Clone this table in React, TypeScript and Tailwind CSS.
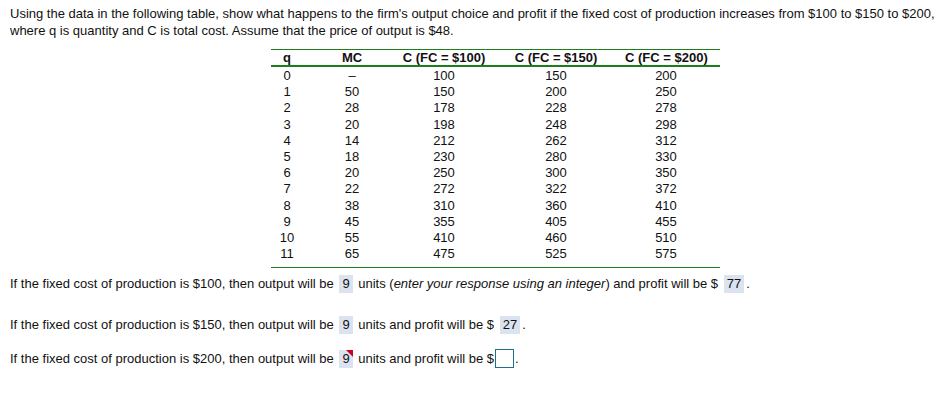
import React from "react";

const rows: [string, string, string, string, string][] = [
  ["0", "–", "100", "150", "200"],
  ["1", "50", "150", "200", "250"],
  ["2", "28", "178", "228", "278"],
  ["3", "20", "198", "248", "298"],
  ["4", "14", "212", "262", "312"],
  ["5", "18", "230", "280", "330"],
  ["6", "20", "250", "300", "350"],
  ["7", "22", "272", "322", "372"],
  ["8", "38", "310", "360", "410"],
  ["9", "45", "355", "405", "455"],
  ["10", "55", "410", "460", "510"],
  ["11", "65", "475", "525", "575"],
];

const cols = "grid-cols-[32px_98px_86px_138px_82px_13px]";

function Ans({ v, flag }: { v: string; flag?: boolean }) {
  return (
    <span className="relative inline-block bg-[#dce3f0] px-[3px] mx-[2px] leading-[18px]">
      {v}
      {flag && (
        <span className="absolute top-0 right-0 w-0 h-0 border-t-[7px] border-t-[#d0021b] border-l-[7px] border-l-transparent" />
      )}
    </span>
  );
}

export default function App() {
  return (
    <div
      className="w-[950px] h-[408px] bg-white text-[#111] text-[13px] leading-[17px]"
      style={{ fontFamily: '"Liberation Sans", Arial, sans-serif' }}
    >
      <div className="pl-[10px] pt-[5px]">
        <p>
          Using the data in the following table, show what happens to the firm's output choice and profit if the fixed
          cost of production increases from $100 to $150 to $200,
        </p>
        <p>where q is quantity and C is total cost. Assume that the price of output is $48.</p>
      </div>

      <div className="ml-[271px] mt-[10px] w-[449px]">
        <div className="border-t border-[#1a7f1a]" />
        <div className={`grid ${cols} text-center font-bold h-[15px] leading-[15px] whitespace-nowrap`}>
          <div>q</div>
          <div>MC</div>
          <div>C (FC = $100)</div>
          <div>C (FC = $150)</div>
          <div>C (FC = $200)</div>
          <div />
        </div>
        <div className="border-t-2 border-[#1a7f1a]" />
        <div className="pt-[1px] pb-[5px]">
          {rows.map((r, i) => (
            <div key={i} className={`grid ${cols} text-center h-[16.2px] leading-[16px]`}>
              {r.map((c, j) => (
                <div key={j}>{c}</div>
              ))}
              <div />
            </div>
          ))}
        </div>
        <div className="border-t border-[#1a7f1a]" />
      </div>

      <div className="pl-[10px] mt-[7px] flex flex-col leading-[18px]">
        <p>
          If the fixed cost of production is $100, then output will be <Ans v="9" /> units (
          <i>enter your response using an integer</i>) and profit will be $ <Ans v="77" />.
        </p>
        <p className="mt-[23px]">
          If the fixed cost of production is $150, then output will be <Ans v="9" /> units and profit will be ${" "}
          <Ans v="27" />.
        </p>
        <p className="mt-[15px] flex items-center">
          <span className="whitespace-pre">If the fixed cost of production is $200, then output will be </span>
          <Ans v="9" flag />
          <span className="whitespace-pre"> units and profit will be $</span>
          <span className="inline-block w-[19px] h-[19px] border border-[#1f6f8b] mx-[1px]" />
          <span>.</span>
        </p>
      </div>
    </div>
  );
}
